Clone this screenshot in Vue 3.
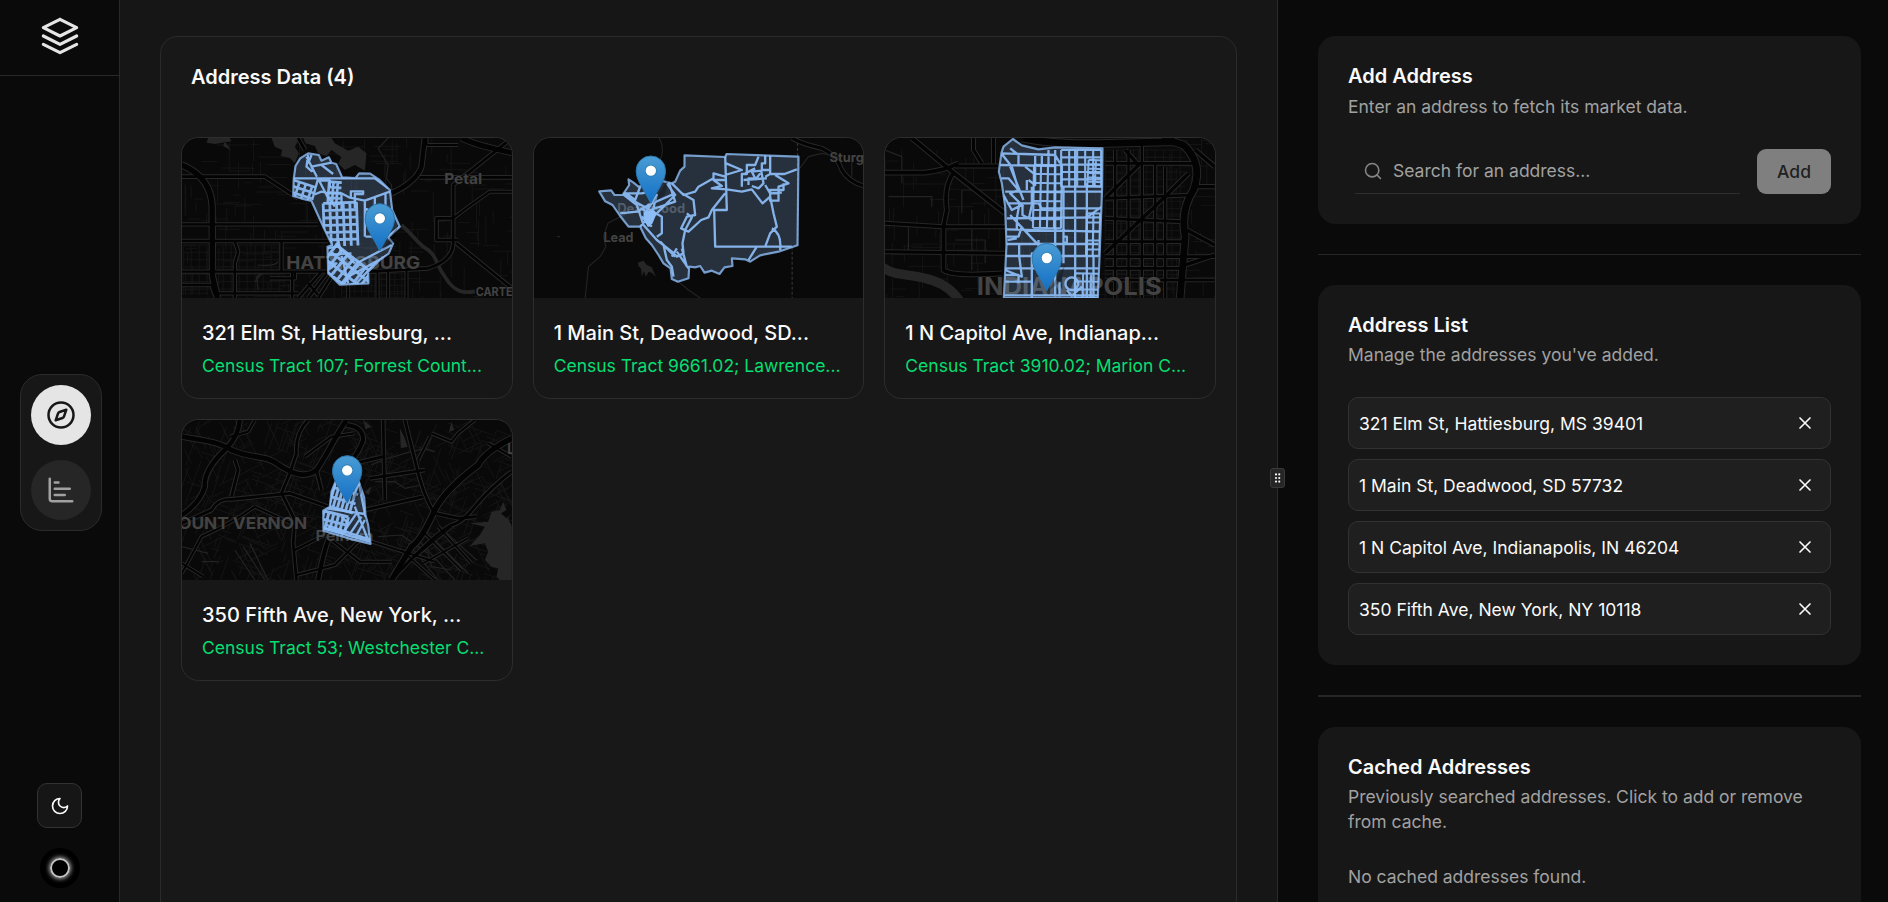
<script setup>
const LIGHT = '#8dbdf6'

// Builds a street lattice: columns every dx, rows every dy, inside a w by h box.
function lattice(x, y, w, h, dx, dy) {
  let d = ''
  for (let i = 0; i <= w; i += dx) d += `M${x + i} ${y}v${h}`
  for (let j = 0; j <= h; j += dy) d += `M${x} ${y + j}h${w}`
  return d
}

// Irregular side streets, repeatable for a given seed.
function sideStreets(seed, ox, oy, count, tilt) {
  let s = seed
  const rnd = () => (s = (s * 16807) % 2147483647) / 2147483647
  let d = ''
  for (let i = 0; i < count; i++) {
    const x = Math.round(ox + rnd() * 990)
    const y = Math.round(oy + rnd() * 480)
    const l = Math.round(20 + rnd() * 75)
    const k = Math.round(l * tilt)
    d += rnd() > 0.5 ? `M${x} ${y}l${l} ${k}` : `M${x} ${y}l${-k} ${l}`
  }
  return d
}

const cards = [
  {
    id: 'hattiesburg',
    title: '321 Elm St, Hattiesburg, ...',
    tract: 'Census Tract 107; Forrest Count...',
    box: '21 24 990 480',
    pin: [615, 265],
    minor: sideStreets(91, 21, 24, 230, 0) + lattice(25, 345, 300, 150, 24, 22) + lattice(500, 430, 190, 74, 20, 18),
    water: 'M290 24L300 50L322 60L318 78L345 84L360 100L372 70L360 50L375 24ZM385 24L392 40L420 48L430 70L455 78L470 60L500 82L490 100L510 120L540 105L570 122L575 70L550 50L520 62L480 40L470 24ZM100 24L95 38L120 42L170 34L165 24ZM150 34L168 60L145 48Z',
    river: 'M680 285C715 315 720 330 745 350C790 375 780 400 810 440C840 490 870 490 900 484',
    riverWidth: 11,
    thin: 'M640 24L610 55L640 105L635 145L650 165L652 200M250 480L245 440L262 430L240 455M248 405Q300 410 310 395',
    roads: [
      ['M21 105C80 130 110 170 112 230L113 440L128 504', 16],
      ['M21 140H270L370 205M370 24L390 60', 8],
      ['M21 283H430M21 333H460M21 425H460M320 333V425M180 335L190 365L180 400V504M21 465H110L118 490H370M285 445H360V425M352 425V504', 7],
      ['M460 425L400 504M440 425L370 504M480 425L430 504M400 460L430 495', 7],
      ['M750 24L740 110Q725 155 650 190', 13],
      ['M860 24Q900 45 1011 68', 15],
      ['M1011 24L835 165V330Q840 390 760 415L580 425M735 142H1011M835 265H785V330H850M845 340L1011 475', 8],
      ['M1011 185H945Q880 230 835 265M755 45V24M755 45H850M695 420V504M640 425V504M608 425V504M520 460V504', 6]
    ],
    labels: [
      { text: 'HATTIESBURG', x: 334, y: 416, size: 53, width: 402 },
      { text: 'Petal', x: 808, y: 161, size: 43, width: 114 },
      { text: 'CARTE', x: 903, y: 499, size: 34, width: 110 }
    ],
    outline: 'M376 85L400 70L432 75L440 92L462 82L470 98L484 102L502 142L542 144L553 130L586 131L612 148L645 180L652 240L675 290L640 322L655 340L642 370L615 390L580 425L581 460L495 464L460 430L458 350L472 345L445 290L410 213L378 205L355 198L357 145L362 108Z',
    streets: [
      { d: lattice(0, 0, 100, 130, 20, 22), t: 'translate(445 220) rotate(-2)', w: 8.5 },
      { d: lattice(0, 0, 150, 200, 22, 27), t: 'translate(485 345) rotate(38)', w: 9 },
      { d: lattice(0, 0, 70, 60, 20, 18), t: 'translate(355 150) rotate(18)', w: 8 },
      { d: lattice(0, 0, 38, 65, 13, 16), t: 'translate(463 155) rotate(4)', w: 8 }
    ],
    lines: 'M357 145H600L640 175M395 80L425 138L410 110L470 98M440 105L475 132M410 75L400 100M400 75L395 110L412 125M430 145L412 210M432 150L458 200L480 230M432 152H465V170M415 195L440 185L465 190L500 190L525 203L570 212L645 185M528 205V184H565V192H540V235M570 215V320M600 200V318M632 190V325M570 235L650 270M500 190V240M458 355L485 350M460 400H485L460 420M500 460L545 400L650 345M520 440L640 375M545 460L605 395M572 320H640L675 290M482 340L540 400M490 330L520 460M460 375L530 370'
  },
  {
    id: 'deadwood',
    title: '1 Main St, Deadwood, SD...',
    tract: 'Census Tract 9661.02; Lawrence...',
    box: '26 24 990 480',
    pin: [377, 122],
    minor: '',
    water: 'M338 398L355 392L364 404L380 412L392 440L380 428L370 426L362 440L356 424L350 440L348 416L340 408Z',
    river: '',
    riverWidth: 0,
    thin: 'M402 24Q420 55 405 90L420 150M315 245L248 280L235 320L242 350L225 380L190 410L180 504M460 455L490 480L525 504M820 120L850 80L890 70L930 78M980 140V80M95 320H105',
    dashed: 'M817 24V345M801 350V504',
    roads: [['M800 24Q830 42 890 55Q935 75 950 120Q970 155 1016 168', 9]],
    labels: [
      { text: 'Deadwood', x: 276, y: 250, size: 38, width: 204 },
      { text: 'Lead', x: 235, y: 335, size: 38, width: 90 },
      { text: 'Sturg', x: 913, y: 97, size: 38, width: 103 }
    ],
    outline: 'M478 76L600 81L604 72L820 80L817 346L760 365L705 376L675 395L660 388L620 385L622 408L598 412L583 432L560 422L538 428L525 408L510 412L492 410L490 445L458 455L440 447L436 415L415 400L400 375L380 345L362 325L345 290L310 290L285 258L262 225L240 214L222 184L258 181L268 195L292 195L312 165L310 148L325 158L340 170L400 150L440 160L450 155L465 122L478 110Z',
    streets: [],
    lines: 'M600 76L605 240H567L570 350H800M735 75V130M600 135L650 120L603 100M600 140L565 130V145L520 170L510 185L475 195L440 160M600 150H565L590 168L560 175L605 178L650 185L680 178L712 220L735 200L745 250L755 290L735 310L720 350H695L670 390M740 295Q770 310 765 360M650 170V132H665V105H690L700 80M720 75V100H710V120H735M670 165V145H690L680 125L708 122L715 160L700 175L680 168M720 140L735 132H778L815 118M750 135L790 160L760 170V212H735V180H775V160M655 150L725 145M720 165L735 190L770 188M690 115L660 130M705 130L690 150M600 190L560 240L550 262L528 270L490 305L468 295L485 260L510 255L505 210L470 190M485 250L500 262L480 300L472 340L475 370L455 380L440 365L395 330L355 285L335 225L290 190H350L390 180M285 250L335 245L370 225L450 190M330 215L375 240L450 215L430 155M375 240L410 260V310L395 320M345 290L380 250L345 235M350 260L380 290M290 190L345 225M415 345L425 390L440 410L445 440M455 365L490 415M455 355L440 380M470 355L485 410M345 170L330 210L300 188M360 250L395 195L370 290M405 335L450 380M425 160L450 195L390 255',
    dense: 'M355 245L385 240L395 250L382 280L368 290L355 270Z'
  },
  {
    id: 'indianapolis',
    title: '1 N Capitol Ave, Indianap...',
    tract: 'Census Tract 3910.02; Marion C...',
    box: '29 24 990 480',
    pin: [515, 384],
    minor: sideStreets(77, 29, 24, 190, 0) + lattice(690, 60, 240, 430, 25, 22),
    water: '',
    river: 'M20 410C60 440 95 430 150 445Q220 460 255 515',
    riverWidth: 28,
    thin: 'M29 60L80 80V160M40 200H170V230M260 250V180H380M100 370V290M240 330H330V400M290 240V420',
    roads: [
      ['M110 24L235 128L390 250M29 128H150Q210 120 250 100M235 128Q205 170 215 240L205 290V420Q230 440 380 430', 11],
      ['M29 280L205 290H390M29 365L390 370M240 108H370M295 24V60L320 100M355 24V100', 9],
      ['M440 24Q540 45 700 40L900 35M860 24L925 45Q985 100 955 180Q915 240 930 320L915 504', 20],
      ['M690 100H960M690 205L955 195M690 265L915 275M690 335H920M690 380H1019M690 415H915M690 450H1019', 8],
      ['M800 40V504M760 60V504M720 60V504M870 110V504M840 100V504', 7],
      ['M690 205L790 105L750 60M690 370L870 200L940 130M960 60L1019 110M960 170H1019M935 300L1019 345M930 405L1019 375', 10]
    ],
    labels: [{ text: 'INDIANAPOLIS', x: 305, y: 494, size: 71, width: 555 }],
    outline: 'M413 27L440 46L490 58L540 52L682 55L681 170L674 360L668 504H386L394 345L390 230L380 160L371 125L379 68L385 50Z',
    streets: [
      { d: lattice(558, 60, 120, 110, 24, 22), t: '', w: 6.5 },
      { d: lattice(475, 105, 84, 190, 21, 27), t: 'rotate(1 520 200)', w: 6.5 },
      { d: lattice(600, 430, 72, 74, 24, 24), t: 'rotate(1 620 420)', w: 6 },
      { d: lattice(640, 90, 44, 78, 22, 13), t: 'rotate(3 650 100)', w: 6 },
      { d: lattice(634, 250, 42, 130, 20, 27), t: 'rotate(1 650 300)', w: 6.5 }
    ],
    lines: 'M380 70L540 75L555 100M375 105L540 108M405 110L445 210M378 70L410 110L430 180L405 190L445 230M378 145H400L430 180M390 185H680M395 220H490L500 235H680M395 265L680 262M405 255L485 340M395 298L680 305M390 342H670M390 378H670M388 415H670M390 455H470M388 496H668M433 220L425 265V300M432 340V378L440 440L390 420M470 170V225L462 262L475 275M455 150V180M460 150L480 165V75M600 60V504M635 160V504M655 380V504M680 230L635 262M395 320H430L440 290M397 330L425 325M490 330V370H470V504M405 55L430 75V105M385 195L410 240L440 225M442 225V255L470 270M540 60V500M565 170V400M575 320V338H565V320ZM390 435H430V460M520 60V110M500 75V110'
      + 'M590 442a19 19 0 1 0 .1 0ZM553 455V500M575 480L590 498L620 470M450 110L475 130'
  },
  {
    id: 'pelham',
    title: '350 Fifth Ave, New York, ...',
    tract: 'Census Tract 53; Westchester C...',
    box: '21 30 990 480',
    pin: [517, 181],
    minor: sideStreets(33, 21, 30, 350, 0.35) + sideStreets(99, 21, 30, 250, -0.5),
    water: 'M985 275L975 300L950 305L940 335L885 340L930 350L915 375L885 408L930 400L940 425L930 450L950 470L970 475L965 500L975 510H1011V350L1000 325L1011 310L995 325L978 310L995 300ZM675 55L690 85L698 110L678 115ZM830 35L838 60L822 66ZM570 245L590 228L582 255ZM565 30L590 50L572 58Z',
    river: '',
    riverWidth: 0,
    thin: 'M590 165L625 150L690 130L750 115L780 125M600 215H660L690 235L740 225M610 380L680 375L760 430L770 470L830 480M21 410L100 430M130 455H80M700 400L790 510M735 395L840 510M775 385L880 490M810 365L905 450M180 420L240 510M205 410L270 510M225 400L280 510',
    roads: [
      ['M21 80C80 90 130 95 170 120C240 150 270 130 320 170C370 200 400 200 425 180C460 130 480 80 515 30', 14],
      ['M195 30Q190 80 155 115Q85 180 90 230Q75 280 21 315', 13],
      ['M515 45Q565 50 565 90Q550 130 530 150M460 390Q445 430 430 510', 12],
      ['M1011 85Q930 125 910 165Q810 240 780 300Q740 390 710 410L650 510', 16],
      ['M1011 185Q950 230 900 290Q860 340 830 345Q770 380 650 510', 8],
      ['M690 30L725 170Q750 270 780 310L850 325L905 320M625 30L630 270M400 30Q360 70 365 130L345 190L320 250L360 330L355 400L365 510', 8],
      ['M21 340L110 300Q130 265 170 268L345 250L460 290M570 300L745 260M585 205L750 180M540 160L625 140M180 150L190 180L170 260M425 180L440 240', 8],
      ['M21 490L80 380Q170 340 240 290M240 290L350 340M360 420L450 375L555 455H650M365 495L480 465L560 385L780 455M21 460L85 500M390 140L470 80L540 70M240 30L220 65L165 80M765 80L730 150M770 70L830 95L850 70L900 30M940 100L1011 140', 6],
      ['M720 440L830 350M745 460L880 385M680 420L780 510M750 370L860 480M790 350L890 460', 5]
    ],
    labels: [
      { text: 'OUNT VERNON', x: 10, y: 356, size: 47, width: 387 },
      { text: 'Pelham', x: 422, y: 392, size: 43, width: 174 },
      { text: 'L', x: 997, y: 132, size: 45, width: 22 }
    ],
    outline: 'M482 215L552 215L568 262L572 315L580 345L587 402L520 385L446 362L445 302L465 290L470 245Z',
    streets: [
      { d: lattice(0, 0, 75, 50, 15, 25), t: 'translate(448 303) rotate(14)', w: 9 },
      { d: lattice(0, 0, 75, 90, 13, 29), t: 'translate(486 205) rotate(16)', w: 8.5 }
    ],
    lines: 'M447 355L585 395M460 350L585 388M500 375L545 310M520 380L560 320M540 385L570 330M455 345L530 370M540 290L582 395M552 220L572 320M482 215L460 295M520 340L500 320M455 295L570 312'
  }
]

const addresses = [
  '321 Elm St, Hattiesburg, MS 39401',
  '1 Main St, Deadwood, SD 57732',
  '1 N Capitol Ave, Indianapolis, IN 46204',
  '350 Fifth Ave, New York, NY 10118'
]
</script>

<template>
  <div class="app">
    <aside class="sidebar">
      <div class="brand">
        <svg class="logo" viewBox="0 0 24 24">
          <path d="M12 4L4 8l8 4 8-4-8-4M4 12l8 4 8-4M4 16l8 4 8-4" />
        </svg>
      </div>
      <nav class="nav">
        <button class="nav-btn active" aria-label="Explore">
          <svg viewBox="0 0 24 24">
            <circle cx="12" cy="12" r="10" />
            <path d="m16.24 7.76-1.804 5.411a2 2 0 0 1-1.265 1.265L7.76 16.24l1.804-5.411a2 2 0 0 1 1.265-1.265z" />
          </svg>
        </button>
        <button class="nav-btn" aria-label="Charts">
          <svg viewBox="0 0 24 24"><path d="M3 3v16a2 2 0 0 0 2 2h16M7 16h8M7 11h12M7 6h3" /></svg>
        </button>
      </nav>
      <div class="side-foot">
        <button class="theme" aria-label="Theme">
          <svg viewBox="0 0 24 24"><path d="M12 3a6 6 0 0 0 9 9 9 9 0 1 1-9-9Z" /></svg>
        </button>
        <div class="avatar"><span class="ring"></span></div>
      </div>
    </aside>

    <main class="main">
      <section class="board">
        <h2 class="board-title">Address Data (4)</h2>
        <div class="grid">
          <article v-for="c in cards" :key="c.id" class="card">
            <svg class="map" :viewBox="c.box" preserveAspectRatio="xMidYMid slice">
              <defs>
                <clipPath :id="'tract-' + c.id"><path :d="c.outline" /></clipPath>
                <linearGradient :id="'pin-' + c.id" x1="0" y1="0" x2="0" y2="1">
                  <stop offset="0" stop-color="#4a9cd3" />
                  <stop offset="1" stop-color="#126fc6" />
                </linearGradient>
              </defs>
              <g fill="none" stroke-linejoin="round">
                <path :d="c.minor" stroke="#171717" stroke-width="2.5" />
                <path :d="c.water" fill="#262626" />
                <path v-if="c.river" :d="c.river" stroke="#262626" :stroke-width="c.riverWidth" />
                <path :d="c.thin" stroke="#232323" stroke-width="3.5" />
                <path v-if="c.dashed" :d="c.dashed" stroke="#333" stroke-width="3.5" stroke-dasharray="9 6" />
                <path v-for="(r, i) in c.roads" :key="'a' + i" :d="r[0]" stroke="#272727" :stroke-width="r[1] + 6" />
                <path v-for="(r, i) in c.roads" :key="'b' + i" :d="r[0]" stroke="#030303" :stroke-width="r[1]" />
              </g>
              <g class="labels">
                <text v-for="l in c.labels" :key="l.text" :x="l.x" :y="l.y" :font-size="l.size" :textLength="l.width" lengthAdjust="spacingAndGlyphs">{{ l.text }}</text>
              </g>
              <path :d="c.outline" fill="#8dbdf6" fill-opacity=".22" />
              <g :clip-path="`url(#tract-${c.id})`" fill="none" :stroke="LIGHT" stroke-opacity=".92">
                <path v-for="(s, i) in c.streets" :key="i" :d="s.d" :transform="s.t || undefined" :stroke-width="s.w" />
                <path :d="c.lines" stroke-width="7" stroke-linejoin="round" />
              </g>
              <path v-if="c.dense" :d="c.dense" :fill="LIGHT" />
              <path :d="c.outline" fill="none" :stroke="LIGHT" stroke-opacity=".8" stroke-width="6.5" stroke-linejoin="round" />
              <g :transform="`translate(${c.pin[0]} ${c.pin[1]})`">
                <path d="M5 98L55 20L42 72Z" fill="#000" fill-opacity=".25" />
                <path d="M-44 0A44 44 0 0 1 44 0C44 30 25 48 0 98C-25 48 -44 30 -44 0Z" :fill="`url(#pin-${c.id})`" stroke="#2b76ac" stroke-width="3" />
                <circle r="18" fill="#2f7db5" />
                <circle r="15.5" fill="#fff" />
              </g>
            </svg>
            <div class="info">
              <h3>{{ c.title }}</h3>
              <p>{{ c.tract }}</p>
            </div>
          </article>
        </div>
      </section>
    </main>

    <div class="divider">
      <div class="handle">
        <svg viewBox="0 0 24 24"><circle v-for="n in 6" :key="n" :cx="n % 2 ? 8 : 14.5" :cy="Math.ceil(n / 2) * 7.2 - 2.4" r="2.1" /></svg>
      </div>
    </div>

    <aside class="panel">
      <section class="box">
        <h2>Add Address</h2>
        <p class="desc first">Enter an address to fetch its market data.</p>
        <div class="search-row">
          <label class="search">
            <svg viewBox="0 0 24 24"><circle cx="11" cy="11" r="8" /><path d="m21 21-4.3-4.3" /></svg>
            <span>Search for an address...</span>
          </label>
          <button class="add">Add</button>
        </div>
      </section>
      <div class="rule"></div>
      <section class="box">
        <h2>Address List</h2>
        <p class="desc">Manage the addresses you've added.</p>
        <ul class="list">
          <li v-for="a in addresses" :key="a">
            <span>{{ a }}</span>
            <svg viewBox="0 0 24 24"><path d="M18 6 6 18M6 6l12 12" /></svg>
          </li>
        </ul>
      </section>
      <div class="rule thick"></div>
      <section class="box">
        <h2>Cached Addresses</h2>
        <p class="desc">Previously searched addresses. Click to add or remove from cache.</p>
        <p class="empty">No cached addresses found.</p>
      </section>
    </aside>
  </div>
</template>

<style>
body { background: #0a0a0a; overflow: hidden; }
</style>

<style scoped>
* { box-sizing: border-box; margin: 0; padding: 0; }
.app {
  display: flex;
  height: 902px;
  overflow: hidden;
  background: #0a0a0a;
  color: #fafafa;
  font-family: Inter, "Liberation Sans", sans-serif;
  font-size: 17.5px;
  line-height: 25px;
}
button { border: 0; font: inherit; display: grid; place-items: center; }
svg { display: block; }
.sidebar {
  flex: none;
  width: 120px;
  border-right: 1px solid #292929;
  display: flex;
  flex-direction: column;
  align-items: center;
  justify-content: space-between;
}
.brand {
  width: 100%;
  height: 76px;
  border-bottom: 1px solid #292929;
  display: flex;
  justify-content: center;
  padding: 11px 0 0 1px;
}
.logo { width: 50px; height: 50px; }
.logo path, .nav svg *, .theme path, .search svg *, .list svg path {
  fill: none;
  stroke: currentColor;
  stroke-linecap: round;
  stroke-linejoin: round;
  stroke-width: 2;
}
.logo { color: #e5e5e5; }
.logo path { stroke-width: 1.5; }
.nav {
  width: 82px;
  height: 157px;
  padding: 10px;
  margin: 45px 0 0 3px;
  border: 1px solid #2b2b2b;
  border-radius: 22px;
  background: #171717;
  display: flex;
  flex-direction: column;
  gap: 15px;
}
.nav-btn {
  width: 60px;
  height: 60px;
  border-radius: 50%;
  background: #262626;
  color: #a1a1a1;
}
.nav-btn.active { background: #e5e5e5; color: #171717; }
.nav-btn svg { width: 30px; height: 30px; }
.side-foot { display: flex; flex-direction: column; align-items: center; gap: 20px; padding-bottom: 14px; }
.theme {
  width: 45px;
  height: 45px;
  border: 1px solid #333;
  border-radius: 10px;
  background: #161616;
  color: #fafafa;
}
.theme svg { width: 20px; height: 20px; }
.avatar { width: 40px; height: 40px; border-radius: 50%; background: #000; display: grid; place-items: center; margin-left: 1px; }
.ring {
  width: 20px;
  height: 20px;
  border-radius: 50%;
  border: 2px solid #c4c4c4;
  box-shadow: 0 0 4px 1px #a0a0a0;
}
.main { flex: none; width: 1157px; padding: 36px 40px 0; background: #161616; }
.board {
  height: 1000px;
  padding: 0 20px;
  border: 1px solid #2b2b2b;
  border-radius: 17.5px;
  background: #181818;
}
.board-title { padding: 25px 10px 0; height: 100px; font-size: 20px; line-height: 30px; font-weight: 600; }
.grid { display: grid; grid-template-columns: repeat(3, 1fr); gap: 20px; }
.card {
  height: 262px;
  min-width: 0;
  overflow: hidden;
  border: 1px solid #2d2d2d;
  border-radius: 17.5px;
  background: #171717;
}
.map { width: 100%; height: 160px; background: #090909; }
.labels { fill: #434343; font-weight: 700; stroke: #0b0b0b; stroke-width: 2; paint-order: stroke; }
.info { padding: 20px; white-space: nowrap; }
.info h3 { font-size: 20px; line-height: 30px; font-weight: 500; }
.info p { margin-top: 5px; color: #05df72; }
.divider { flex: none; width: 1px; background: #2b2b2b; position: relative; }
.handle {
  position: absolute;
  left: -7px;
  top: 468px;
  width: 15px;
  height: 20px;
  border: 1px solid #393939;
  border-radius: 3px;
  background: #262626;
  display: grid;
  place-items: center;
}
.handle svg { width: 12px; height: 12px; fill: #fafafa; }
.panel { flex: 1; padding: 36px 27px 0 40px; }
.box { padding: 30px; border-radius: 17.5px; background: #171717; }
.box h2 { font-size: 20px; line-height: 20px; font-weight: 600; }
.desc { margin-top: 6.9px; color: #a1a1a1; }
.desc.first { margin-top: 7.5px; }
.search-row { margin-top: 30px; display: flex; justify-content: space-between; height: 45.5px; }
.search {
  width: 385px;
  height: 45px;
  margin-left: 7px;
  padding-left: 7.5px;
  display: flex;
  align-items: center;
  gap: 10.5px;
  border-bottom: 1px solid #2e2e2e;
  color: #a1a1a1;
}
.search svg { width: 20px; height: 20px; opacity: .8; }
.search svg * { stroke-width: 1.9; }
.add { width: 74px; height: 45px; border-radius: 9px; background: #7f7f7f; color: #1f1f1f; font-weight: 500; }
.rule { height: 1px; margin: 30px 0; background: #262626; }
.rule.thick { height: 2px; }
.list { list-style: none; margin-top: 30.2px; display: flex; flex-direction: column; gap: 10px; }
.list li {
  height: 52px;
  padding: 0 15px 0 10px;
  display: flex;
  align-items: center;
  justify-content: space-between;
  border: 1px solid #323232;
  border-radius: 10px;
  background: #1f1f1f;
}
.list svg { width: 20px; height: 20px; }
.empty { margin-top: 30px; color: #a1a1a1; }
</style>
